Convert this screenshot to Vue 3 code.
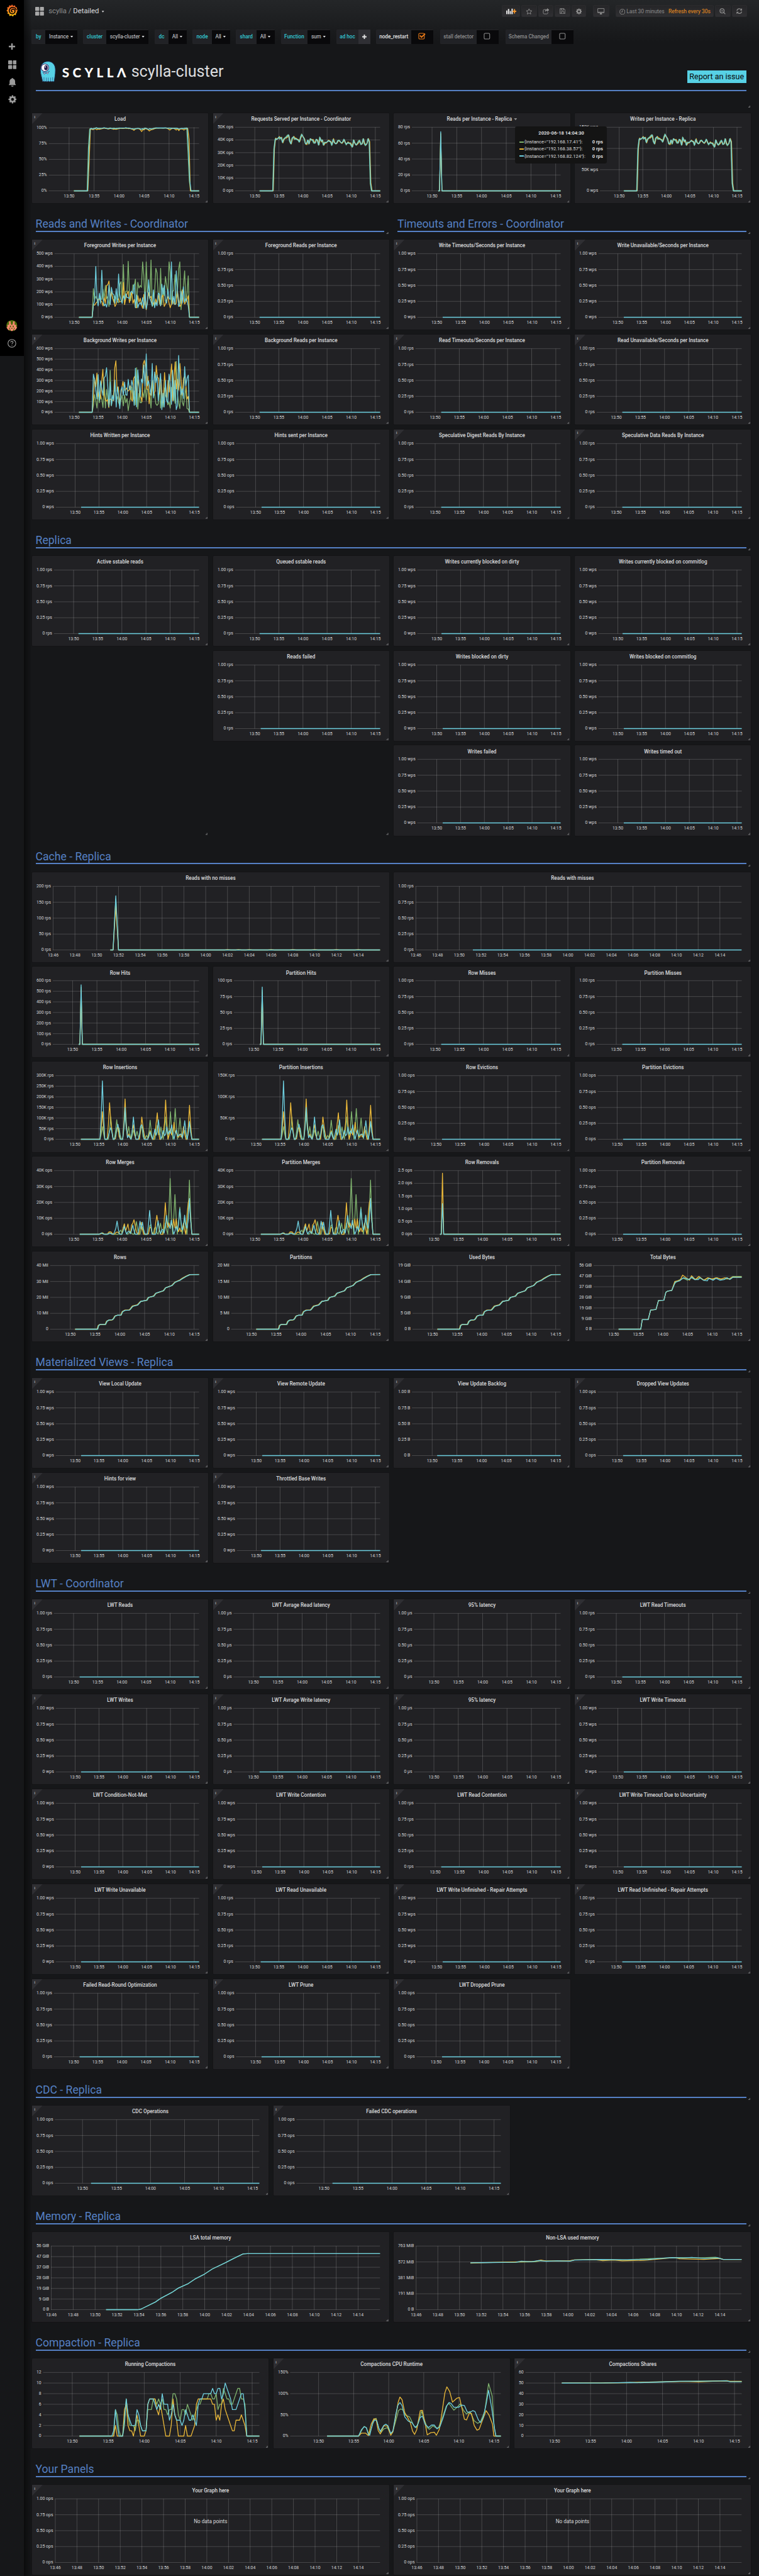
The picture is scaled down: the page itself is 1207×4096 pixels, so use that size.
<script setup>
const FULL = 903.5, THIRD = 598.33, QUARTER = 445.75
const PLOT_TOP = 35.5, PLOT_BOTTOM = 196.5
const GREEN = '#7eb26d', YELLOW = '#eab839', BLUE = '#6ed0e0'

// Roboto advance widths in em, used to size the y axis gutter
const adv = { ' ': 0.248, '.': 0.263, w: 0.751, p: 0.561, s: 0.516, r: 0.338, o: 0.57, '%': 0.73, K: 0.627, M: 0.873, G: 0.681, i: 0.243, l: 0.243, B: 0.623, 'µ': 0.566 }
const textWidth = (s) => [...s].reduce((n, c) => n + (adv[c] ?? 0.5615), 0) * 11

// --- series helpers: every series is a list of [minute after 13:00, value as fraction of the axis] ---
const even = (t0, t1, max, str) => {
  const v = str.split(',').map(Number)
  return [[51, 0], ...v.map((y, i) => [t0 + (i * (t1 - t0)) / (v.length - 1), y / max]), [76, v[v.length - 1] / max]]
}
const pts = (str, k = 1) => {
  const v = str.trim().split(/\s+/).map(Number)
  const out = []
  for (let i = 0; i < v.length; i += 2) out.push([v[i], v[i + 1] * k])
  return out
}
const peaks = (str, max) => {
  const p = pts(str)
  const out = []
  for (let t = 51.25; t <= 76; t += 0.25) {
    out.push([t, Math.max(0, ...p.map(([a, v]) => v * (1 - Math.abs(t - a) / 0.42))) / max])
  }
  return out
}
const noise = (i, s) => Math.sin(i * 12.9898 + s * 78.233) * 0.6 + Math.sin(i * 4.7 + s * 3.1) * 0.4
const vary = (list, amp, s, dt = 0) => list.map(([t, v], i) => [t >= 76 ? t : t + dt, v > 0.05 ? v + amp * noise(i, s) : v])
const S = (g, y, b) => [
  { c: GREEN, d: g },
  { c: YELLOW, d: y },
  { c: BLUE, d: b },
]
const spike = (v) => pts(`51.25 0 51.5 0 51.75 ${v} 52 0 76 0`)

const loadY = even(53.75, 74.25, 100.9, '0,45,97,98,97,98,98.5,97,98,97.5,98,98.5,99,99.5,99,99,98,98.5,99,98.5,97.5,98,97.5,98,98.5,99,99.5,99,99,99.5,99,99.5,98.5,99,98,97.5,96,98,98.5,98.5,98.5,97,94,97,97,99,98,97,95,96.5,97,97.5,98.5,99,99.5,99.5,99.5,99.5,99.5,99.5,99.5,99.5,99,98,96.5,98,99,99,98,96.5,98.5,95.5,98,98,98,96.5,98,98,99,82,0')
const loadB = even(53.7, 74.4, 100.9, '0,68,98,99,98,98.5,99,100,99,99,99,99,99.5,100,99.5,99,98.5,99,99.5,98.5,99,99,98.5,99,99,99.5,99.5,99.5,99.5,99.5,100,99.5,99.5,99,98.5,98.5,98,98,98.5,99,99,98.5,97.5,98.5,98,99.5,99,98,97.5,98.5,98,98.5,99,99.5,99.7,99.7,99.7,99.7,99.7,99.7,99.7,99.7,99.6,99.3,99.5,99.2,99.3,99,99.2,99.2,99.4,98.5,98,98.8,99,98.8,99.2,99.3,99.5,60,16,0')
const reqB = even(53.75, 74.25, 50, '0,33,41,40.5,41,42.3,41,42,38,40.5,41.5,42,43,44,39,37,41.5,42.5,41,41,40.5,40,38.5,42,44.3,42.5,41,37,37,40,37,41,40,40,38,37.5,40.5,39.5,36,42,39,40,36,38,38,38.5,39.5,39,38.5,36,40.5,38,37,37.5,39.5,39.5,38.5,37.5,38.5,40.5,38,36.5,38,37.5,37.5,36,34.5,40,37.5,36,37,38.5,39.5,36.5,37,41,37,36,37,41,38.5,6,0')
const req = S(vary(reqB, 0.012, 1, -0.06), vary(reqB, 0.014, 2, 0.08), reqB)

const fgG = '0,225,140,165,145,140,150,145,140,220,145,250,145,165,85,170,200,150,120,170,150,120,115,260,280,120,415,115,205,205,440,200,130,185,255,240,300,75,275,230,250,235,435,330,100,435,200,180,150,450,85,100,200,385,350,180,105,385,100,230,170,320,250,190,435,350,100,205,210,335,150,200,380,435,60,180,250,365,130,190,325,0'
const fgY = '0,100,95,110,120,140,145,130,125,90,155,110,250,255,285,150,200,150,130,85,105,140,145,120,125,130,275,100,150,185,205,115,165,200,110,140,80,75,170,120,150,100,70,180,110,60,130,195,150,165,95,115,90,145,105,185,130,90,160,175,85,105,140,165,110,75,105,155,110,100,110,205,140,85,100,215,130,105,120,140,170,0'
const fgB = '0,95,130,400,150,90,190,110,370,150,90,105,80,130,255,100,235,185,180,110,225,120,340,180,135,110,170,140,185,155,155,145,195,205,185,260,75,175,75,105,115,95,155,70,200,65,110,295,150,125,90,215,75,120,90,190,180,90,260,180,250,130,110,220,150,140,435,105,165,100,365,200,85,110,205,110,240,120,150,130,90,0'
const bgG = '0,60,165,110,40,190,90,160,120,45,290,40,215,120,50,395,60,130,180,220,110,150,90,60,120,160,60,165,90,130,15,90,140,240,120,200,70,420,30,180,90,90,190,140,240,110,220,210,160,40,290,150,175,80,65,80,260,40,180,50,230,160,130,70,95,40,235,110,300,85,480,170,90,35,240,100,60,140,240,35,30,0'
const bgY = '0,130,320,240,370,150,190,125,290,405,170,120,105,120,45,125,120,115,110,420,485,200,240,90,160,230,290,210,210,230,200,205,250,120,105,320,340,160,240,310,160,140,100,455,490,420,215,340,80,180,160,300,170,200,440,330,320,170,310,150,90,375,230,140,300,190,330,455,110,320,475,220,310,210,460,300,160,320,340,250,125,150,0'
const bgB = '0,360,310,210,125,355,115,295,220,160,325,340,420,250,55,285,65,160,110,305,50,240,160,35,210,240,160,285,165,160,310,220,210,300,245,65,415,50,400,270,145,315,275,445,245,550,250,295,230,160,460,135,380,280,350,110,260,365,25,180,50,300,110,90,360,270,75,395,110,300,25,65,535,280,165,220,130,430,250,320,350,0'

const ins = S(
  peaks('55.75 60 57.5 105 58.75 92 59.2 60 60.5 120 61.25 60 62.25 45 63 38 63.9 80 65 18 65.75 90 67.2 75 68 58 69 105 70 130 71 145 72 100 72.9 55 74 80', 300),
  peaks('55.75 130 57.25 172 57.5 90 58.9 75 60.5 190 61.25 25 62.2 78 64 105 64.25 60 65.7 46 67.2 142 67 50 68.5 30 69 185 70 50 70.75 80 71.25 30 72 25 72.75 60 74 160', 300),
  peaks('55.75 275 57.3 45 57.55 62 58.8 55 59.05 80 60.5 150 61.25 18 62.25 105 63.8 70 64.05 78 65.75 35 66.75 48 67.5 92 68.5 42 69.25 58 69.75 40 70.25 68 71.2 50 71.9 30 72.2 28 73 88 74 84', 300),
)
const mrg = S(
  peaks('55.9 1.2 57.6 1 59.7 3 60.45 7 61.7 2 63 8 64.2 5 65.9 8 66.9 6 68 7 69 7 70 35 71 25 72 17 73 10 74 34', 40),
  peaks('55.9 1 57.4 2 57.7 1.6 58.9 1.8 59.2 1.4 60.45 7.5 61.2 7.3 62.15 9 62.45 10.4 62.7 6 64 7.5 65.9 6 67.2 13.5 67.5 7 69 19.8 69.7 8 70.2 8 70.75 9.6 71.25 9.6 72 4 72.75 7 73.7 22.5 74 22.5', 40),
  peaks('55.75 .8 57.5 .8 58.75 4 59 8.3 60.5 5 61.4 2.5 62.25 5.8 63.75 8.2 64.25 7.6 65.75 15 67.5 8.5 68.4 4 69.25 11.8 69.6 8 70.25 8.8 71.25 5 72 16 72.2 9 73 12 73.3 7 74 22.5', 40),
)
const rise = pts('51 0 55.5 0 55.7 2.3 56 3 57.1 3 57.4 5 57.8 5.8 58.5 6 58.7 6.5 59.05 8.3 59.5 8.8 60.25 8.9 60.55 11 61.05 11.8 61.9 12 62.1 12.5 62.6 14.4 63.6 15.2 64.25 17.5 65.45 18.2 65.8 20 66.85 20.8 67.3 22.7 68.8 24.2 69.25 26 69.9 26.7 70.55 27.5 71.15 29.5 72.15 30.8 72.75 32 73.45 33.3 74.15 34.3 76 34.3', 1 / 40)
const rows = S(vary(rise, 0.003, 3, 0.06), vary(rise, 0.005, 5, -0.08), rise)
const totalStart = '51 0 55.5 0 55.8 .15 57 .15 57.5 .3 58.6 .31 59.1 .45 60.2 .455 60.6 .58 61 .6 61.8 .61 '
const total = S(
  pts(totalStart + '62.4 .72 63 .76 63.7 .79 64.2 .8 65 .77 65.7 .81 66.6 .78 67.4 .81 68.4 .77 69.2 .8 70.2 .78 71 .81 71.8 .78 72.8 .79 73.5 .79 74.2 .83 76 .83'),
  pts(totalStart + '62.4 .75 63.5 .77 64 .85 64.5 .82 65.4 .77 65.8 .84 66.6 .78 67.3 .83 68.3 .77 69.1 .81 70 .79 70.8 .81 71.8 .79 72.6 .81 73.4 .79 74.2 .82 76 .82'),
  pts(totalStart + '62.5 .74 63.4 .76 64.2 .81 65.3 .78 65.9 .82 66.4 .78 67.2 .78 67.5 .81 68.2 .77 69 .76 69.3 .8 70.2 .77 70.8 .8 71.6 .77 72.4 .78 73 .81 73.6 .78 74.2 .815 76 .815'),
)
const lsa = pts('51 0 53.9 0 54.2 .01 55.5 .12 56 .18 57 .27 57.6 .34 58.5 .41 59.1 .48 60 .56 60.7 .64 61.8 .73 62.7 .81 63.5 .875 63.9 .88 76 .88')
const nonLsa = S(
  pts('51 .73 52 .74 55 .745 57 .752 57.5 .77 60 .762 60.6 .782 63 .79 65.5 .778 66 .79 70 .82 72 .815 73.6 .825 74 .81 74.3 .79 76 .79'),
  pts('51 .735 55 .75 57 .76 57.5 .78 58 .762 60.2 .77 60.6 .782 62.5 .785 63.2 .77 64.2 .78 65 .768 67 .775 68 .79 69.8 .82 70.3 .8 72.5 .79 74 .805 74.3 .79 76 .79'),
  pts('51 .738 54 .742 55.2 .745 55.7 .762 56.6 .752 57.3 .772 58 .76 59 .768 60.2 .762 60.6 .78 63 .788 65 .785 67.4 .788 68.4 .805 69.6 .818 70.6 .812 71.4 .822 72.6 .805 73.8 .815 74.3 .79 76 .79'),
)
const running = S(
  even(55.5, 74.25, 12, '0,0,5,4,1,0,0,2,7,4,2,2,2,1,3,3,2,1,1,1,5,5,5,7,7,6,7,6,7,5,5,4,5,5,8,8,7,4,3,5,5,4,6,5,4,3,4,5,6,6,7,7,7,7,8,8,7,7,8,5,6,6,9,8,7,7,6,6,7,8,9,9,7,7,6,0'),
  even(55.5, 74.25, 12, '0,0,2,0,0,0,0,5,6,2,1,1,0,2,4,2,0,0,0,1,6,7,7,7,7,5,4,6,4,2,0,0,0,2,7,4,3,0,0,0,0,2,0,0,0,1,2,6,7,7,7,7,7,7,7,7,6,6,3,4,3,6,7,5,4,3,2,1,1,3,3,3,4,3,2,0'),
  even(55.5, 74.25, 12, '0,1,5,2,0,0,0,3,7,4,3,2,2,2,5,4,2,1,1,1,6,7,7,7,6,5,6,5,8,6,6,6,3,4,6,4,3,3,3,2,3,5,4,3,3,4,3,2,6,7,7,8,8,8,8,8,9,8,8,9,9,7,8,10,9,8,7,5,5,5,6,7,8,8,5,0'),
)
const cpu = S(
  pts('51.2 0 55.7 0 56.1 12 56.5 23 56.8 20 57.2 3 57.6 22 57.9 38 58.2 42 58.6 18 58.9 8 59.3 17 59.8 20 60.3 6 60.6 12 61 35 61.4 60 61.7 64 62 62 62.4 49 63 45 63.6 24 64 20 64.3 35 64.7 59 65 42 65.5 20 65.8 16 66.3 24 66.8 19 67.1 20 67.6 40 68.2 70 68.6 77 69.3 61 69.7 67 70.2 76 70.7 60 71.1 52 71.6 58 72.2 36 72.7 30 73.1 34 73.7 58 74.25 124 74.75 95 75.05 20 75.3 0 76 0', 1 / 150),
  pts('51.2 0 55.7 0 56.1 7 56.7 7 57.1 1 57.5 28 57.9 41 58.2 40 58.5 13 58.8 5 59.3 24 59.8 24 60.3 2 60.6 10 61 45 61.35 80 61.6 92 61.9 86 62.3 55 62.7 44 63.1 31 63.4 12 63.7 4 64 15 64.5 60 64.8 61 65.2 30 65.5 3 66 8 66.5 9 66.8 2 67.2 15 67.6 55 68 101 68.3 116 68.7 105 69.1 80 69.7 89 70.1 91 70.5 62 70.8 40 71.1 38 71.5 54 71.8 53 72.2 25 72.6 14 72.9 16 73.4 38 73.9 60 74.3 50 74.8 28 75 0 76 0', 1 / 150),
  pts('51.2 0 55.7 0 56.1 15 56.5 22 56.8 20 57.1 4 57.3 2 57.7 30 58 38 58.3 36 58.6 18 58.8 11 59.3 25 59.6 28 59.9 24 60.3 6 60.6 12 61 50 61.3 72 61.6 79 61.9 72 62.3 45 62.8 35 63.3 32 63.8 20 64.1 26 64.5 44 64.8 47 65.2 28 65.7 20 66.1 26 66.5 26 66.9 17 67.3 22 67.8 45 68.3 72 68.6 79 68.9 77 69.3 68 70 68 70.4 73 70.8 72 71.2 57 71.6 56 72 60 72.3 58 72.8 38 73.1 32 73.5 45 73.9 75 74.25 108 74.7 65 75.1 18 75.3 0 76 0', 1 / 150),
)
const shares = S(
  pts('51 .833 56.5 .833 57 .838 59 .84 62 .845 64 .85 67 .86 70 .862 72 .865 74 .87 74.4 .857 76 .857'),
  pts('51 .835 57 .835 60 .84 63 .848 66 .852 68 .858 70 .852 72 .862 73.8 .865 74.4 .86 76 .86'),
  pts('51 .833 56.8 .834 60.5 .843 61.5 .84 65 .85 67.5 .86 70 .86 72 .864 73.8 .868 74.4 .854 76 .854'),
)

// --- axes ---
const unit = (u) => ['1.00 ' + u, '0.75 ' + u, '0.50 ' + u, '0.25 ' + u, '0 ' + u]
const W = unit('wps'), R = unit('rps'), O = unit('ops'), U = unit('µs'), B = unit('B')
const steps = (from, by, suffix, zero) => {
  const out = []
  for (let v = from; v > 0; v -= by) out.push(v + suffix)
  return [...out, zero]
}

const panel = (title, labels, o = {}) => {
  const w = o.w ?? QUARTER
  const left = 16.5 + Math.max(...labels.map(textWidth))
  const right = w - 23.3
  const x = (t) => left + ((t - 46) * (right - left)) / 30
  const top = o.top ?? PLOT_TOP
  const y = (f) => PLOT_BOTTOM - f * (PLOT_BOTTOM - PLOT_TOP)
  const wide = w === FULL
  const ticks = []
  for (let t = wide ? 46 : 50; t <= (wide ? 74 : 75); t += wide ? 2 : 5) {
    ticks.push({ x: x(t), label: `${t >= 60 ? 14 : 13}:${String(t % 60).padStart(2, '0')}` })
  }
  const n = labels.length - 1
  const series = o.data ?? (o.none ? [] : [{ c: BLUE, d: [[o.s ?? 51.25, 0], [76, 0]] }])
  return {
    kind: 'graph', title, info: o.i, caret: o.caret, empty: o.empty, tooltip: o.tooltip,
    span: wide ? 'half' : w === THIRD ? 'third' : 'quarter', place: o.place,
    w, left, right, ticks,
    rows: labels.map((label, i) => ({ label, y: top + (i * (PLOT_BOTTOM - top)) / n })),
    lines: series.map((s) => ({ c: s.c, p: s.d.map(([t, v]) => `${x(t).toFixed(1)},${y(v).toFixed(1)}`).join(' ') })),
  }
}
const head = (title, half) => ({ kind: 'head', title, span: half ? 'half' : 'whole' })
const blank = (place) => ({ kind: 'blank', span: 'quarter', place })
const I = { i: true }

const items = [
  panel('Load', ['100%', '75%', '50%', '25%', '0%'], { i: true, top: 37, data: S(vary(loadB, 0.004, 4, -0.1), loadY, loadB) }),
  panel('Requests Served per Instance - Coordinator', steps(50, 10, 'K ops', '0 ops'), { i: true, data: req }),
  panel('Reads per Instance - Replica', steps(80, 20, ' rps', '0 rps'), { caret: true, tooltip: true, data: S(spike(0.85), spike(0.9), spike(0.93)) }),
  panel('Writes per Instance - Replica', steps(150, 50, 'K wps', '0 wps'), { data: req }),
  head('Reads and Writes - Coordinator', true),
  head('Timeouts and Errors - Coordinator', true),
  panel('Foreground Writes per Instance', steps(500, 100, ' wps', '0 wps'), { i: true, data: S(...[fgG, fgY, fgB].map((v) => even(53.75, 74, 500, v))) }),
  panel('Foreground Reads per Instance', R, { i: true, s: 51 }),
  panel('Write Timeouts/Seconds per Instance', W, I),
  panel('Write Unavailable/Seconds per Instance', W, I),
  panel('Background Writes per Instance', steps(600, 100, ' wps', '0 wps'), { i: true, data: S(...[bgG, bgY, bgB].map((v) => even(53.75, 74, 600, v))) }),
  panel('Background Reads per Instance', R, { i: true, s: 51 }),
  panel('Read Timeouts/Seconds per Instance', R, I),
  panel('Read Unavailable/Seconds per Instance', R, I),
  panel('Hints Written per Instance', W),
  panel('Hints sent per Instance', O),
  panel('Speculative Digest Reads By Instance', R, I),
  panel('Speculative Data Reads By Instance', R, I),
  head('Replica'),
  panel('Active sstable reads', R, { s: 51 }),
  panel('Queued sstable reads', R, { s: 51 }),
  panel('Writes currently blocked on dirty', W, { s: 51 }),
  panel('Writes currently blocked on commitlog', W, { s: 51 }),
  blank('tall-first'),
  panel('Reads failed', R, { place: 'second' }),
  panel('Writes blocked on dirty', W),
  panel('Writes blocked on commitlog', W),
  blank('second'),
  panel('Writes failed', W),
  panel('Writes timed out', W),
  head('Cache - Replica'),
  panel('Reads with no misses', steps(200, 50, ' rps', '0 rps'), {
    w: FULL,
    data: S(spike(0.8), pts('51.25 0 51.5 0 51.75 .68 52 0 61.75 0 62 .006 62.3 0 62.75 0 63 .006 63.3 0 63.7 0 64 .006 64.3 0 65.7 0 66 .006 66.3 0 67.7 0 68 .006 68.3 0 69.7 0 70 .006 70.3 0 71.7 0 72 .006 72.3 0 73.7 0 74 .006 74.3 0 76 0'), spike(0.85)),
  }),
  panel('Reads with misses', R, { w: FULL }),
  panel('Row Hits', steps(600, 100, ' rps', '0 rps'), { data: S(spike(0.9), spike(0.85), spike(0.935)) }),
  panel('Partition Hits', steps(100, 25, ' rps', '0 rps'), { data: S(spike(0.85), spike(0.82), spike(0.9)) }),
  panel('Row Misses', R),
  panel('Partition Misses', R),
  panel('Row Insertions', steps(300, 50, 'K rps', '0 rps'), { data: ins }),
  panel('Partition Insertions', steps(150, 50, 'K rps', '0 rps'), { data: ins }),
  panel('Row Evictions', O),
  panel('Partition Evictions', O),
  panel('Row Merges', steps(40, 10, 'K ops', '0 ops'), { data: mrg }),
  panel('Partition Merges', steps(40, 10, 'K ops', '0 ops'), { data: mrg }),
  panel('Row Removals', ['2.5 ops', '2.0 ops', '1.5 ops', '1.0 ops', '0.5 ops', '0 ops'], { data: S(spike(0.48), spike(0.96), spike(0.48)) }),
  panel('Partition Removals', O),
  panel('Rows', steps(40, 10, ' Mil', '0'), { data: rows }),
  panel('Partitions', steps(20, 5, ' Mil', '0'), { data: rows }),
  panel('Used Bytes', ['19 GiB', '14 GiB', '9 GiB', '5 GiB', '0 B'], { data: rows }),
  panel('Total Bytes', ['56 GiB', '47 GiB', '37 GiB', '28 GiB', '19 GiB', '9 GiB', '0 B'], { data: total }),
  head('Materialized Views - Replica'),
  panel('View Local Update', W, I),
  panel('View Remote Update', W, I),
  panel('View Update Backlog', B, { i: true, s: 51 }),
  panel('Dropped View Updates', O, I),
  panel('Hints for view', W, I),
  panel('Throttled Base Writes', W, { i: true, s: 51 }),
  head('LWT - Coordinator'),
  panel('LWT Reads', R, I),
  panel('LWT Avrage Read latency', U, I),
  panel('95% latency', U, { i: true, none: true }),
  panel('LWT Read Timeouts', R, I),
  panel('LWT Writes', W, I),
  panel('LWT Avrage Write latency', U, I),
  panel('95% latency', U, { i: true, none: true }),
  panel('LWT Write Timeouts', W, I),
  panel('LWT Condition-Not-Met', W, I),
  panel('LWT Write Contention', W, I),
  panel('LWT Read Contention', R, I),
  panel('LWT Write Timeout Due to Uncertainty', W, I),
  panel('LWT Write Unavailable', W, I),
  panel('LWT Read Unavailable', R, I),
  panel('LWT Write Unfinished - Repair Attempts', W, I),
  panel('LWT Read Unfinished - Repair Attempts', R, I),
  panel('Failed Read-Round Optimization', R, I),
  panel('LWT Prune', O, I),
  panel('LWT Dropped Prune', O, I),
  head('CDC - Replica'),
  panel('CDC Operations', O, { i: true, w: THIRD }),
  panel('Failed CDC operations', O, { i: true, w: THIRD }),
  head('Memory - Replica'),
  panel('LSA total memory', ['56 GiB', '47 GiB', '37 GiB', '28 GiB', '19 GiB', '9 GiB', '0 B'], { w: FULL, data: S(lsa, [], lsa) }),
  panel('Non-LSA used memory', ['763 MiB', '572 MiB', '381 MiB', '191 MiB', '0 B'], { w: FULL, data: nonLsa }),
  head('Compaction - Replica'),
  panel('Running Compactions', steps(12, 2, '', '0'), { w: THIRD, data: running }),
  panel('Compactions CPU Runtime', ['150%', '100%', '50%', '0%'], { i: true, w: THIRD, data: cpu }),
  panel('Compactions Shares', steps(60, 10, '', '0'), { i: true, w: THIRD, data: shares }),
  head('Your Panels'),
  panel('Your Graph here', O, { i: true, w: FULL, none: true, empty: true }),
  panel('Your Graph here', O, { i: true, w: FULL, none: true, empty: true }),
]

const vars = [
  { name: 'by', value: 'Instance', a: 35, b: 80 },
  { name: 'cluster', value: 'scylla-cluster', a: 59, b: 107 },
  { name: 'dc', value: 'All', a: 35, b: 45.5 },
  { name: 'node', value: 'All', a: 49, b: 46 },
  { name: 'shard', value: 'All', a: 52, b: 46 },
  { name: 'Function', value: 'sum', a: 68, b: 57 },
]
const toggles = [
  { name: 'node_restart', on: true, a: 89 },
  { name: 'stall detector', on: false, a: 92 },
  { name: 'Schema Changed', on: false, a: 116 },
]
const hosts = [
  { c: GREEN, ip: '192.168.17.41' },
  { c: YELLOW, ip: '192.168.38.57' },
  { c: BLUE, ip: '192.168.82.124' },
]
const gear = 'M9.2 1h3.6l.5 2.9 1.7.7 2.4-1.7 2.5 2.6-1.6 2.4.7 1.6 3 .6v3.6l-3 .6-.7 1.7 1.6 2.4-2.5 2.6-2.4-1.7-1.7.7-.5 3H9.2l-.6-3-1.6-.7L4.6 21 2 18.4l1.7-2.4-.7-1.7-3-.6v-3.6l3-.6.7-1.6L2 5.5l2.6-2.6L7 4.6l1.6-.7zM11 8a3.8 3.8 0 1 0 0 7.6A3.8 3.8 0 0 0 11 8z'
</script>

<template>
  <div class="app">
    <aside class="side">
      <svg class="logo" viewBox="0 0 28 31">
        <defs>
          <linearGradient id="flame" x1="0" y1="0" x2="0" y2="1">
            <stop offset="0" stop-color="#f05a28" /><stop offset=".55" stop-color="#f68b1f" /><stop offset="1" stop-color="#fbca0a" />
          </linearGradient>
        </defs>
        <path fill="url(#flame)" d="M14 0l3 4 4.500-1.800 1.200 4.500 4 1.300-.4 3.200C27.500 13 28 15 27.600 17l-1.200 1-.6 4-1.800 1-.2 4.500-4.800-1.200L16.500 31l-3.500-3-5.500 1.500-.8-4.700L2.500 23.500l1-4.500L0 16l3-4-1.500-4.500L6 6.600 7.300 2l4 1.600z" />
        <path fill="none" stroke="#000" stroke-width="2.600" stroke-linecap="round" d="M24.500 13.500c-2-5-7-7-11.500-5.500C8 9.700 5.800 15 7.800 19.500c2 4.200 7.200 5.500 11 3 3.200-2.300 3.700-6.400 1.500-9-2-2.200-5.600-2-7.200.3-1.200 2-.6 4.300 1.600 5" />
      </svg>
      <svg class="plus" viewBox="0 0 16 16"><path d="M6 0h4v6h6v4h-6v6H6v-6H0V6h6z" /></svg>
      <svg class="tiles" viewBox="0 0 22 22"><path d="M1 0h8l1 1v8l-1 1H1L0 9V1zM13 0h8l1 1v8l-1 1h-8l-1-1V1zM1 12h8l1 1v8l-1 1H1l-1-1v-8zM13 12h8l1 1v8l-1 1h-8l-1-1v-8z" /></svg>
      <svg class="bell" viewBox="0 0 18 22"><path d="M9 0c1 0 1.500.8 1.700 1.700C14.500 2.600 16 6 16 9v5.500l2 2.500v1H0v-1l2-2.500V9c0-3 1.500-6.400 5.300-7.300C7.500.8 8 0 9 0zM6 19.500h6c0 1.500-1.300 2.500-3 2.500s-3-1-3-2.500z" /></svg>
      <svg class="cog" viewBox="0 0 22 23.600"><path fill-rule="evenodd" :d="gear" /></svg>
      <div class="bottom">
        <svg class="avatar" viewBox="0 0 28 28">
          <clipPath id="round"><circle cx="14" cy="14" r="14" /></clipPath>
          <g clip-path="url(#round)">
            <path fill="#4c6c0c" d="M0 0h28v28H0z" />
            <path fill="#fb8a72" d="M7 3h4v6h6V3h4v9h4v6h3v6h-3v4h-5v-4h-3v4h-6v-4H8v4H3v-4H0v-6h3v-6h4z" />
            <path fill="#4c6c0c" d="M12 9h1V3h2v6h1v3h-4zM9 14h3v4H9zM16 14h3v4h-3zM12 20h4v2h-4zM7 19h2v4H7zM19 19h2v4h-2z" />
          </g>
        </svg>
        <svg class="help" viewBox="0 0 22 22"><circle cx="11" cy="11" r="9.900" /><path d="M8 8.600c0-1.800 1.300-2.900 3-2.900s3 1.100 3 2.600c0 2.200-2.900 2.300-2.900 4.500M11.100 14.800v1.900" /></svg>
      </div>
    </aside>

    <div class="main">
      <nav class="nav">
        <svg class="tiles" viewBox="0 0 22 22"><path d="M1 0h8l1 1v8l-1 1H1L0 9V1zM13 0h8l1 1v8l-1 1h-8l-1-1V1zM1 12h8l1 1v8l-1 1H1l-1-1v-8zM13 12h8l1 1v8l-1 1h-8l-1-1v-8z" /></svg>
        <div class="crumb"><span>scylla / </span>Detailed<i class="tri small"></i></div>
        <div class="tools">
          <div class="btn add-panel">
            <svg width="26" height="16" viewBox="0 0 26 16"><path fill="#e3e3e3" d="M0 6h3v9H0zM4.300 2h3.400v13H4.300zM9 7h3v8H9zM13.300 1h3.400v14h-3.400z" /><path fill="#f0932b" d="M19.500 2.500h3v4H26v3h-3.500v4h-3v-4H16v-3h3.500z" /></svg>
          </div>
          <div class="btn">
            <svg width="17" height="16" viewBox="0 0 17 16"><path class="ln" d="M8.500 1.500l2.100 4.600 4.900.6-3.600 3.400 1 4.900-4.400-2.500L4.100 15l1-4.900L1.500 6.700l4.900-.6z" /></svg>
          </div>
          <div class="btn">
            <svg width="17" height="16" viewBox="0 0 17 16"><path class="ln" d="M8 3.500H4A2.500 2.500 0 0 0 1.500 6v6A2.500 2.500 0 0 0 4 14.500h6.500A2.500 2.500 0 0 0 13 12v-2" /><path fill="#8e8e8e" d="M11 0l6 4.500L11 9V6.200C8.500 6.200 7 7 6.500 10 5 5.500 7.500 3 11 2.900z" /></svg>
          </div>
          <div class="btn">
            <svg width="15" height="15" viewBox="0 0 15 15"><path class="ln" d="M1 1h9.500L14 4.500V14H1zM4 1v4h6V1M4 14V9h7v5" /></svg>
          </div>
          <div class="btn narrow">
            <svg width="15" height="16" viewBox="0 0 22 23.600"><path fill="#8e8e8e" fill-rule="evenodd" :d="gear" /></svg>
          </div>
          <div class="btn tv">
            <svg width="18" height="16" viewBox="0 0 18 16"><path class="ln" d="M1 1h16v10.500H1zM1 10h16" /><path fill="#8e8e8e" d="M7 12h4l1 4H6z" /></svg>
          </div>
          <div class="btn time">
            <svg width="15" height="15" viewBox="0 0 15 15"><circle class="ln" cx="7.500" cy="7.500" r="6.400" /><path class="ln" d="M7.500 3.500v4.500H4.500" /></svg>
            <span>Last 30 minutes</span><b>Refresh every 30s</b>
          </div>
          <div class="btn">
            <svg width="16" height="16" viewBox="0 0 16 16"><circle cx="6.800" cy="6.800" r="5.300" fill="none" stroke="#8e8e8e" stroke-width="2" /><path d="M4 6.800h5.600M10.800 10.800L15 15" stroke="#8e8e8e" stroke-width="2" fill="none" /></svg>
          </div>
          <div class="btn narrow">
            <svg width="15" height="15" viewBox="0 0 15 15"><path d="M1.500 6.500C2 3.500 4.500 1.500 7.500 1.500c2 0 3.700 1 4.800 2.500M13.500 8.500c-.5 3-3 5-6 5-2 0-3.700-1-4.800-2.500" stroke="#8e8e8e" stroke-width="2" fill="none" /><path fill="#8e8e8e" d="M14.500 0v6H9zM.5 15V9H6z" /></svg>
          </div>
        </div>
      </nav>

      <div class="submenu">
        <div v-for="v in vars" :key="v.name" class="var">
          <label :style="{ width: v.a + 'px' }">{{ v.name }}</label>
          <div class="val" :style="{ width: v.b + 'px' }">{{ v.value }}<i class="tri"></i></div>
        </div>
        <div class="var adhoc"><label>ad hoc</label><div class="add"><svg width="11" height="11" viewBox="0 0 11 11"><path fill="#e3e3e3" d="M4 0h3v4h4v3H7v4H4V7H0V4h4z" /></svg></div></div>
        <div v-for="t in toggles" :key="t.name" class="var toggle" :class="{ on: t.on }">
          <label :style="{ width: t.a + 'px' }">{{ t.name }}</label>
          <div class="val">
            <svg width="20" height="18" viewBox="0 0 20 18">
              <rect x="1.500" y="1.500" width="14" height="14.500" rx="2.500" fill="none" :stroke="t.on ? '#eb7b18' : '#8e8e8e'" stroke-width="1.700" />
              <path v-if="t.on" d="M4.500 7l4 4.500 9-9" fill="none" stroke="#eb7b18" stroke-width="3" />
            </svg>
          </div>
        </div>
      </div>

      <div class="grid">
        <header class="banner">
          <div class="brand">
            <svg class="monster" viewBox="0 0 42 54">
              <path d="M2 23C2 8 10 1 21 1s19 7 19 22c0 11-2 20-3 28-1 2-3 2-4 0-1 2-4 2-5 0-2 2-4 2-6 0-2 2-5 2-6 0-2 2-4 2-5 0-2 2-4 1-4-1C6 42 2 34 2 23z" fill="#57d1e5" stroke="#1f2a52" stroke-width="1.500" />
              <path d="M11 41v10M17 42v9M22 42v9M28 42v9M33 41v9" stroke="#33558a" stroke-width="1.300" />
              <circle cx="13.500" cy="17" r="9.500" fill="#fff" stroke="#3d2b66" stroke-width="1.800" />
              <ellipse cx="16" cy="17" rx="4.500" ry="6.300" fill="#2c1f4e" /><circle cx="14.500" cy="15" r="1.500" fill="#fff" />
              <path d="M8 29c6 2.500 13 1.500 17-3.500" stroke="#3d2b66" stroke-width="1.500" fill="none" /><path d="M10 30l2 4 3-3.500zM17 30l3.500 3 1.500-5z" fill="#fff" stroke="#3d2b66" stroke-width="1" />
            </svg>
            <svg class="word" width="168" height="54" viewBox="0 0 168 54"><text x="1" y="42" textLength="162" lengthAdjust="spacing">SCYLLΛ</text></svg>
            <h1>scylla-cluster</h1>
          </div>
          <a class="report">Report an issue</a>
          <i class="grip"></i>
        </header>

        <template v-for="(p, k) in items" :key="k">
          <div v-if="p.kind === 'head'" class="head" :class="p.span"><h2>{{ p.title }}</h2><div class="rule"></div><i class="grip"></i></div>
          <div v-else-if="p.kind === 'blank'" class="blank" :class="[p.span, p.place]"><i class="grip"></i></div>
          <section v-else class="panel" :class="[p.span, p.place]">
            <div v-if="p.info" class="info"><span>i</span></div>
            <h3>{{ p.title }}<i v-if="p.caret" class="tri dim"></i></h3>
            <svg class="plot" :width="p.w" height="228" :viewBox="`0 0 ${p.w} 228`">
              <g class="gl">
                <line v-for="(r, n) in p.rows" :key="n" :x1="p.left - 1" :x2="p.right" :y1="r.y" :y2="r.y" />
                <line v-for="t in p.ticks" :key="t.label" :x1="t.x" :x2="t.x" y1="35.500" y2="196.500" />
              </g>
              <polyline v-for="(l, n) in p.lines" :key="n" :points="l.p" :stroke="l.c" />
              <text v-for="(r, n) in p.rows" :key="'y' + n" :x="p.left - 5.500" :y="r.y + 3" text-anchor="end">{{ r.label }}</text>
              <text v-for="t in p.ticks" :key="'x' + t.label" :x="t.x" y="212.800" text-anchor="middle">{{ t.label }}</text>
            </svg>
            <div v-if="p.empty" class="nodata">No data points</div>
            <div v-if="p.tooltip" class="tip">
              <div class="when">2020-06-18 14:04:30</div>
              <div v-for="h in hosts" :key="h.ip" class="host">
                <i :style="{ background: h.c }"></i><span>{instance="{{ h.ip }}"}:</span><b>0 rps</b>
              </div>
            </div>
            <i class="grip"></i>
          </section>
        </template>
      </div>
    </div>
  </div>
</template>

<style>
body {
  background: #161719;
}
</style>

<style scoped>
.app {
  zoom: 0.62864;
  width: 1920px;
  height: 6515px;
  overflow: hidden;
  display: flex;
  background: #161719;
  color: #dcdddf;
  font-family: Roboto, "Liberation Sans", sans-serif;
  font-size: 13px;
}
.app * { box-sizing: border-box; }
.side {
  width: 60px;
  height: 901px;
  flex: none;
  background: #000;
  display: flex;
  flex-direction: column;
  align-items: center;
  padding-top: 11px;
}
.side svg { fill: #9b9b9b; flex: none; }
.side .logo { width: 29px; height: 31px; }
.side .plus { width: 16px; height: 16px; margin: 68px 0 27px 2px; }
.side .tiles { width: 22px; height: 22px; margin: 0 0 22px 2px; }
.side .bell { width: 18px; height: 22px; margin: 0 0 22px 2px; }
.side .cog { width: 22px; height: 22px; margin-left: 2px; }
.bottom { margin-top: auto; padding-bottom: 22px; display: flex; flex-direction: column; align-items: center; gap: 19px; }
.avatar { width: 28px; height: 28px; }
.help { width: 22px; height: 22px; }
.help circle, .help path { fill: none; stroke: #9b9b9b; stroke-width: 1.8; }
.main {
  flex: 1;
  min-width: 0;
  padding: 0 20px;
  background:
    linear-gradient(90deg, rgba(0, 0, 0, 0.5), rgba(0, 0, 0, 0) 20px),
    linear-gradient(180deg, #242628 0, #161719 108px);
}
.nav { height: 56px; display: flex; align-items: center; padding: 0 11px 0 9px; }
.nav .tiles { width: 22px; height: 22px; fill: #a9a9a9; margin-top: 1px; }
.crumb { font-size: 18px; margin-left: 12px; display: flex; align-items: center; white-space: pre; }
.crumb span { color: #8e8e8e; }
.tools { margin-left: auto; display: flex; gap: 3px; }
.btn {
  width: 39px;
  height: 30px;
  display: flex;
  align-items: center;
  justify-content: center;
  background: linear-gradient(180deg, #262628, #2f2f32);
  border: 1px solid #2b2b2e;
  border-radius: 2px;
}
.btn.add-panel { width: 47px; }
.btn.narrow { width: 38px; }
.btn.tv { width: 41px; margin-left: 14px; }
.btn.time { width: 248px; margin-left: 14px; font-size: 13.5px; color: #8e8e8e; white-space: nowrap; padding-top: 2px; }
.time span { margin: 0 10px 0 3px; }
.time b { font-weight: 400; color: #f79520; }
.ln { fill: none; stroke: #8e8e8e; stroke-width: 1.5; }
.tri { display: inline-block; width: 8px; height: 5px; background: currentColor; clip-path: polygon(0 0, 100% 0, 50% 100%); margin-left: 4px; flex: none; }
.tri.small { width: 6px; height: 4px; margin-left: 7px; margin-top: 3px; }
.tri.dim { color: #8e8e8e; margin-left: 5px; vertical-align: 1px; }
.submenu { display: flex; gap: 15.2px; margin-top: 19px; height: 37px; }
.var { display: flex; height: 37px; box-shadow: inset 0 0 0 1px #262628; border-radius: 3px; background: #212226; line-height: 37px; white-space: nowrap; }
.var label { color: #33c9d4; font-weight: 500; text-align: center; }
.var .val { background: #09090b; padding-left: 9px; display: flex; align-items: center; margin: 1px 0; }
.var .tri { margin-top: -2px; }
.adhoc label { width: 57px; }
.adhoc .add { width: 29px; background: #2f2f34; display: flex; align-items: center; justify-content: center; }
.toggle label { color: #8e8e8e; }
.toggle.on label { color: #e3e3e3; }
.toggle .val { width: 55px; padding: 0 0 2px 18px; }
.toggle + .toggle { margin-left: 3.3px; }
.grid { display: grid; grid-template-columns: repeat(12, 1fr); column-gap: 12px; row-gap: 12px; width: 1819px; margin-left: 1px; }
.whole, .banner { grid-column: span 12; }
.half { grid-column: span 6; }
.third { grid-column: span 4; }
.quarter { grid-column: span 3; }
.second { grid-column: 4 / span 3; }
.tall-first { grid-column: 1 / span 3; grid-row: span 2; }
.banner { position: relative; height: 162px; display: flex; align-items: flex-start; padding-top: 43px; }
.banner::after { content: ""; position: absolute; left: 9px; right: 12px; top: 115px; height: 3px; background: #5580c4; }
.brand { display: flex; align-items: flex-start; padding-left: 20px; }
.monster { width: 42px; height: 54px; }
.word { margin-left: 13px; overflow: visible; }
.word text { font: 900 33px Lato, "Liberation Sans", sans-serif; fill: #fff; }
.banner h1 { margin: 4px 0 0 8px; font-size: 40px; font-weight: 400; line-height: 46px; }
.report { margin: 23px 12px 0 auto; width: 150px; height: 32px; background: #57d1e5; color: #090909; font-size: 20px; line-height: 31px; text-align: center; }
.head { position: relative; height: 68px; padding: 24.5px 12px 0 9px; }
.head h2 { margin: 0; font-size: 28px; font-weight: 400; line-height: 33px; height: 33px; color: #5580c4; white-space: nowrap; }
.rule { height: 3.2px; background: #5580c4; }
.blank { position: relative; }
.panel { position: relative; height: 228px; background: #212124; box-shadow: 0 0 0 1px #141416; border-radius: 2px; }
.panel h3 { position: absolute; left: 0; right: 0; top: 6.5px; margin: 0; text-align: center; font-size: 13px; font-weight: 500; line-height: 16px; white-space: nowrap; z-index: 1; }
.plot { display: block; overflow: visible; }
.plot text { font-size: 11px; fill: #d2d3d5; white-space: pre; }
.gl line { stroke: #c8c8c8; stroke-opacity: 0.25; stroke-width: 1.5; }
.plot polyline { fill: none; stroke-width: 2.1; stroke-linejoin: round; }
.info { position: absolute; left: 0; top: 0; width: 27px; height: 28px; background: #2f2f33; clip-path: polygon(0 0, 100% 0, 0 100%); }
.info span { position: absolute; left: 5.5px; top: 3px; font: bold 11px/12px "Liberation Serif", serif; color: #9b9b9b; }
.grip { position: absolute; right: 2px; bottom: 2px; width: 5px; height: 5px; background: #6a6a6c; clip-path: polygon(60% 0, 100% 0, 100% 100%, 0 100%, 0 60%, 60% 60%); }
.nodata { position: absolute; left: 0; right: 0; top: 84px; text-align: center; line-height: 16px; }
.tip { position: absolute; z-index: 5; left: 307px; top: 34px; width: 231px; height: 94px; padding: 8px 9px 0 11px; background: #141414; border-radius: 5px; font-size: 12px; line-height: 18px; white-space: nowrap; }
.when { text-align: center; font-weight: 700; margin-bottom: 4px; }
.host { display: flex; align-items: center; height: 18px; }
.host i { width: 10px; height: 3px; margin-right: 2px; flex: none; }
.host b { margin-left: auto; }
</style>
